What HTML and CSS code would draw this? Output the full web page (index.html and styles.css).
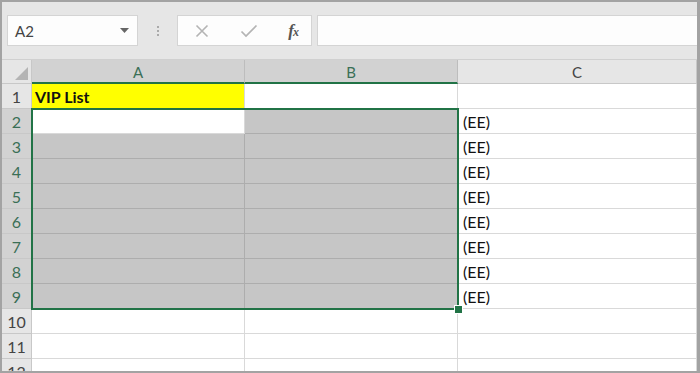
FILE: index.html
```html
<!DOCTYPE html>
<html>
<head>
<meta charset="utf-8">
<link rel="stylesheet" href="styles.css">
</head>
<body>
<div class="app">
  <div class="toolbar">
    <div class="namebox">
      <span class="ref">A2</span>
      <svg class="caret" width="9" height="5" viewBox="0 0 9 5"><path d="M0 0H9L4.5 5Z" fill="#666"/></svg>
    </div>
    <div class="dots"><i></i><i></i><i></i></div>
    <div class="fbtns">
      <svg width="14" height="14" viewBox="0 0 14 14"><path d="M1.5 1.5L12.5 12.5M12.5 1.5L1.5 12.5" stroke="#b4b4b4" stroke-width="1.6" fill="none"/></svg>
      <svg width="18" height="14" viewBox="0 0 18 14"><path d="M1.5 7.5L6 12L16.5 1.5" stroke="#b4b4b4" stroke-width="1.7" fill="none"/></svg>
      <span class="fx">f<small>x</small></span>
    </div>
    <div class="finput"></div>
  </div>
  <div class="grid">
    <div class="hd corner"><span class="tri"></span></div>
    <div class="hd col sel">A</div>
    <div class="hd col sel">B</div>
    <div class="hd col">C</div>

    <div class="hd row">1</div>
    <div class="c yellow"><b>VIP List</b></div>
    <div class="c"></div>
    <div class="c"></div>

    <div class="hd row sel">2</div>
    <div class="c"></div>
    <div class="c s"></div>
    <div class="c">(EE)</div>

    <div class="hd row sel">3</div>
    <div class="c s"></div>
    <div class="c s"></div>
    <div class="c">(EE)</div>

    <div class="hd row sel">4</div>
    <div class="c s"></div>
    <div class="c s"></div>
    <div class="c">(EE)</div>

    <div class="hd row sel">5</div>
    <div class="c s"></div>
    <div class="c s"></div>
    <div class="c">(EE)</div>

    <div class="hd row sel">6</div>
    <div class="c s"></div>
    <div class="c s"></div>
    <div class="c">(EE)</div>

    <div class="hd row sel">7</div>
    <div class="c s"></div>
    <div class="c s"></div>
    <div class="c">(EE)</div>

    <div class="hd row sel">8</div>
    <div class="c s"></div>
    <div class="c s"></div>
    <div class="c">(EE)</div>

    <div class="hd row sel">9</div>
    <div class="c s"></div>
    <div class="c s"></div>
    <div class="c">(EE)</div>

    <div class="hd row">10</div>
    <div class="c"></div>
    <div class="c"></div>
    <div class="c"></div>

    <div class="hd row">11</div>
    <div class="c"></div>
    <div class="c"></div>
    <div class="c"></div>

    <div class="hd row">12</div>
    <div class="c"></div>
    <div class="c"></div>
    <div class="c"></div>

    <div class="selection"><span class="handle"></span></div>
  </div>
</div>
</body>
</html>
```

FILE: styles.css
```css
* { box-sizing: border-box; }
html, body { margin: 0; padding: 0; background: #fff; }
body { font-family: Lato, "Open Sans", "Liberation Sans", sans-serif; }

.app {
  width: 700px;
  height: 373px;
  border: 2px solid #a3a3a3;
  border-right-width: 3px;
  overflow: hidden;
  background: #e6e6e6;
  display: flex;
  flex-direction: column;
}

.toolbar {
  height: 57px;
  flex: none;
  display: flex;
  align-items: flex-start;
  padding: 13px 0 0 5px;
  background: #e6e6e6;
}

.namebox {
  width: 131px;
  height: 31px;
  background: #fdfdfd;
  border: 1px solid #d4d4d4;
  display: flex;
  align-items: center;
  justify-content: space-between;
  padding: 0 8px 0 7px;
}
.ref { font-size: 15px; color: #444; }
.caret { margin-top: -1px; }

.dots {
  width: 39px;
  height: 31px;
  display: flex;
  flex-direction: column;
  align-items: center;
  justify-content: center;
  gap: 2px;
}
.dots i { width: 2px; height: 2px; background: #aaa; display: block; }

.fbtns {
  width: 135px;
  height: 31px;
  background: #fdfdfd;
  border: 1px solid #d4d4d4;
  display: flex;
  align-items: center;
  justify-content: space-between;
  padding: 0 13px 0 17px;
}
.fx {
  font-family: "Liberation Serif", "DejaVu Serif", serif;
  font-style: italic;
  font-weight: bold;
  font-size: 17px;
  color: #555;
  letter-spacing: -1px;
}
.fx small { font-size: 12px; }

.finput {
  flex: 1;
  margin-left: 5px;
  height: 31px;
  background: #fdfdfd;
  border: 1px solid #d4d4d4;
  border-right: none;
}

.grid {
  position: relative;
  flex: 1;
  display: grid;
  grid-template-columns: 30px 213px 213px 1fr;
  grid-template-rows: 24px repeat(11, 25px) 25px;
  background: #fff;
  border-top: 1px solid #d0d0d0;
}

.hd {
  background: #e6e6e6;
  border-right: 1px solid #c8c8c8;
  border-bottom: 1px solid #c8c8c8;
  color: #444;
  font-size: 16px;
  display: flex;
  align-items: center;
  justify-content: center;
}
.hd.col { font-size: 15px; padding-top: 1px; }
.hd.col.sel {
  background: #d2d2d2;
  color: #3a6f56;
  border-right-color: #bdbdbd;
  border-bottom: 2px solid #217346;
}
.hd.row.sel { background: #d2d2d2; color: #3a6f56; }
.hd.col:last-of-type { border-right: none; }

.corner { position: relative; }
.tri {
  position: absolute;
  right: 3px;
  bottom: 3px;
  width: 0;
  height: 0;
  border-style: solid;
  border-width: 0 0 13px 13px;
  border-color: transparent transparent #b4b4b4 transparent;
}

.c {
  border-right: 1px solid #d9d9d9;
  border-bottom: 1px solid #d9d9d9;
  font-size: 16px;
  color: #111;
  display: flex;
  align-items: center;
  padding: 1px 0 0 5px;
}
.c.s { background: #c6c6c6; border-color: #adadad; }
.c.yellow { background: #ffff00; padding-left: 3px; }
.c.yellow b { font-weight: 700; }

.selection {
  position: absolute;
  left: 29px;
  top: 48px;
  width: 428px;
  height: 202px;
  border: 2px solid #217346;
  pointer-events: none;
}
.handle {
  position: absolute;
  right: -5px;
  bottom: -5px;
  width: 7px;
  height: 7px;
  background: #217346;
  outline: 1px solid #fff;
}
```
